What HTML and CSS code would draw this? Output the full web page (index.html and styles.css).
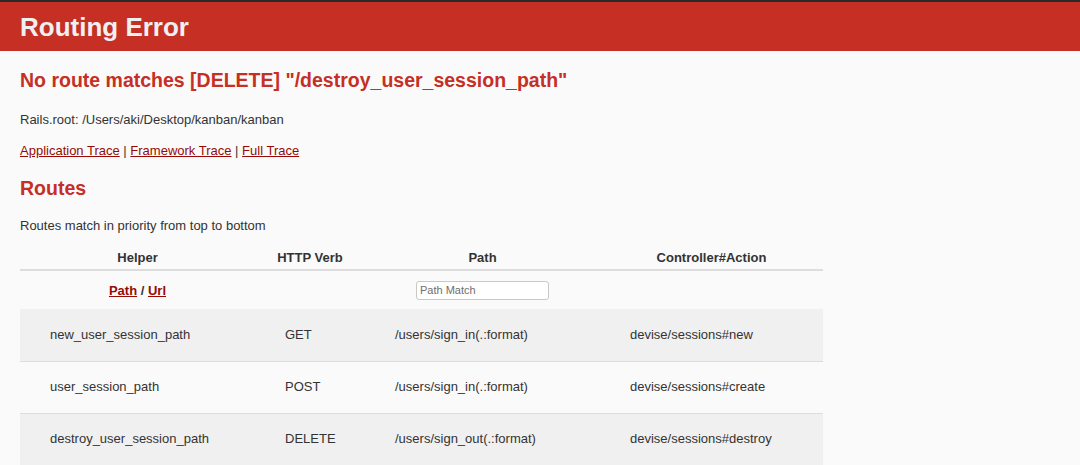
FILE: index.html
```html
<!DOCTYPE html>
<html>
  <head>
    <meta charset="utf-8" />
    <title>Routing Error</title>
    <link rel="stylesheet" href="styles.css">
  </head>
  <body>
    <header>
      <h1>Routing Error</h1>
    </header>
    <div id="container">
      <h2 class="title">No route matches [DELETE] "/destroy_user_session_path"</h2>
      <p class="root">Rails.root: /Users/aki/Desktop/kanban/kanban</p>
      <p class="traces">
        <a href="#">Application Trace</a> |
        <a href="#">Framework Trace</a> |
        <a href="#">Full Trace</a>
      </p>
      <h2 class="routes">Routes</h2>
      <p class="note">Routes match in priority from top to bottom</p>
      <table id="route_table">
        <colgroup>
          <col class="c-helper"/>
          <col class="c-verb"/>
          <col class="c-path"/>
          <col class="c-action"/>
        </colgroup>
        <thead>
          <tr class="top">
            <th>Helper</th>
            <th>HTTP Verb</th>
            <th>Path</th>
            <th>Controller#Action</th>
          </tr>
          <tr class="bottom">
            <th><a href="#">Path</a> / <a href="#">Url</a></th>
            <th></th>
            <th><input type="search" id="search" placeholder="Path Match"/></th>
            <th></th>
          </tr>
        </thead>
        <tbody>
          <tr>
            <td>new_user_session_path</td>
            <td>GET</td>
            <td>/users/sign_in(.:format)</td>
            <td>devise/sessions#new</td>
          </tr>
          <tr>
            <td>user_session_path</td>
            <td>POST</td>
            <td>/users/sign_in(.:format)</td>
            <td>devise/sessions#create</td>
          </tr>
          <tr>
            <td>destroy_user_session_path</td>
            <td>DELETE</td>
            <td>/users/sign_out(.:format)</td>
            <td>devise/sessions#destroy</td>
          </tr>
        </tbody>
      </table>
    </div>
  </body>
</html>
```

FILE: styles.css
```css
*{
  box-sizing: border-box;
}
body{
  background: #FAFAFA;
  color: #333;
  margin: 0px;
  font-family: "Liberation Sans", Arial, sans-serif;
  font-size: 13px;
  line-height: 18px;
}
header{
  border-top: 2px solid #2a2a2a;
  background: #C52F24;
  color: #F0F0F0;
  height: 51px;
  padding: 0px 20px;
  display: flex;
  align-items: center;
}
h1{
  margin: 0px;
  font-size: 26px;
  line-height: 28px;
}
#container{
  padding: 0px 20px;
}
h2{
  color: #C52F24;
  font-size: 19.5px;
  line-height: 25px;
  margin: 0px;
}
p{
  margin: 0px;
}
a{
  color: #980905;
}
.title{
  padding-top: 17px;
}
.root{
  margin-top: 18px;
}
.traces{
  margin-top: 13px;
}
.routes{
  margin-top: 16px;
}
.note{
  margin-top: 16px;
}
#route_table{
  margin-top: 12px;
  border-collapse: collapse;
  table-layout: fixed;
  width: 803px;
}
.c-helper{ width: 235px; }
.c-verb{ width: 110px; }
.c-path{ width: 235px; }
.c-action{ width: 223px; }
#route_table th{
  font-size: 13px;
  text-align: center;
  padding: 0px;
}
#route_table thead tr.top{
  height: 22px;
  border-bottom: 2px solid #ddd;
}
#route_table thead tr.top th{
  line-height: 22px;
}
#route_table thead tr.bottom{
  height: 39px;
}
#route_table thead tr.bottom th{
  line-height: 15px;
}
#search{
  width: 133px;
  height: 19px;
  border: 1px solid #c8c8c8;
  border-radius: 3px;
  background: #fff;
  font-family: "Liberation Sans", Arial, sans-serif;
  font-size: 11px;
  padding: 0px 3px;
  vertical-align: middle;
}
#search::placeholder{
  color: #6e6e6e;
}
#route_table tbody tr{
  height: 52px;
  border-bottom: 1px solid #ddd;
}
#route_table tbody tr:nth-child(odd){
  background: #f0f0f0;
}
#route_table td{
  padding: 0px 30px;
  white-space: nowrap;
}
```
